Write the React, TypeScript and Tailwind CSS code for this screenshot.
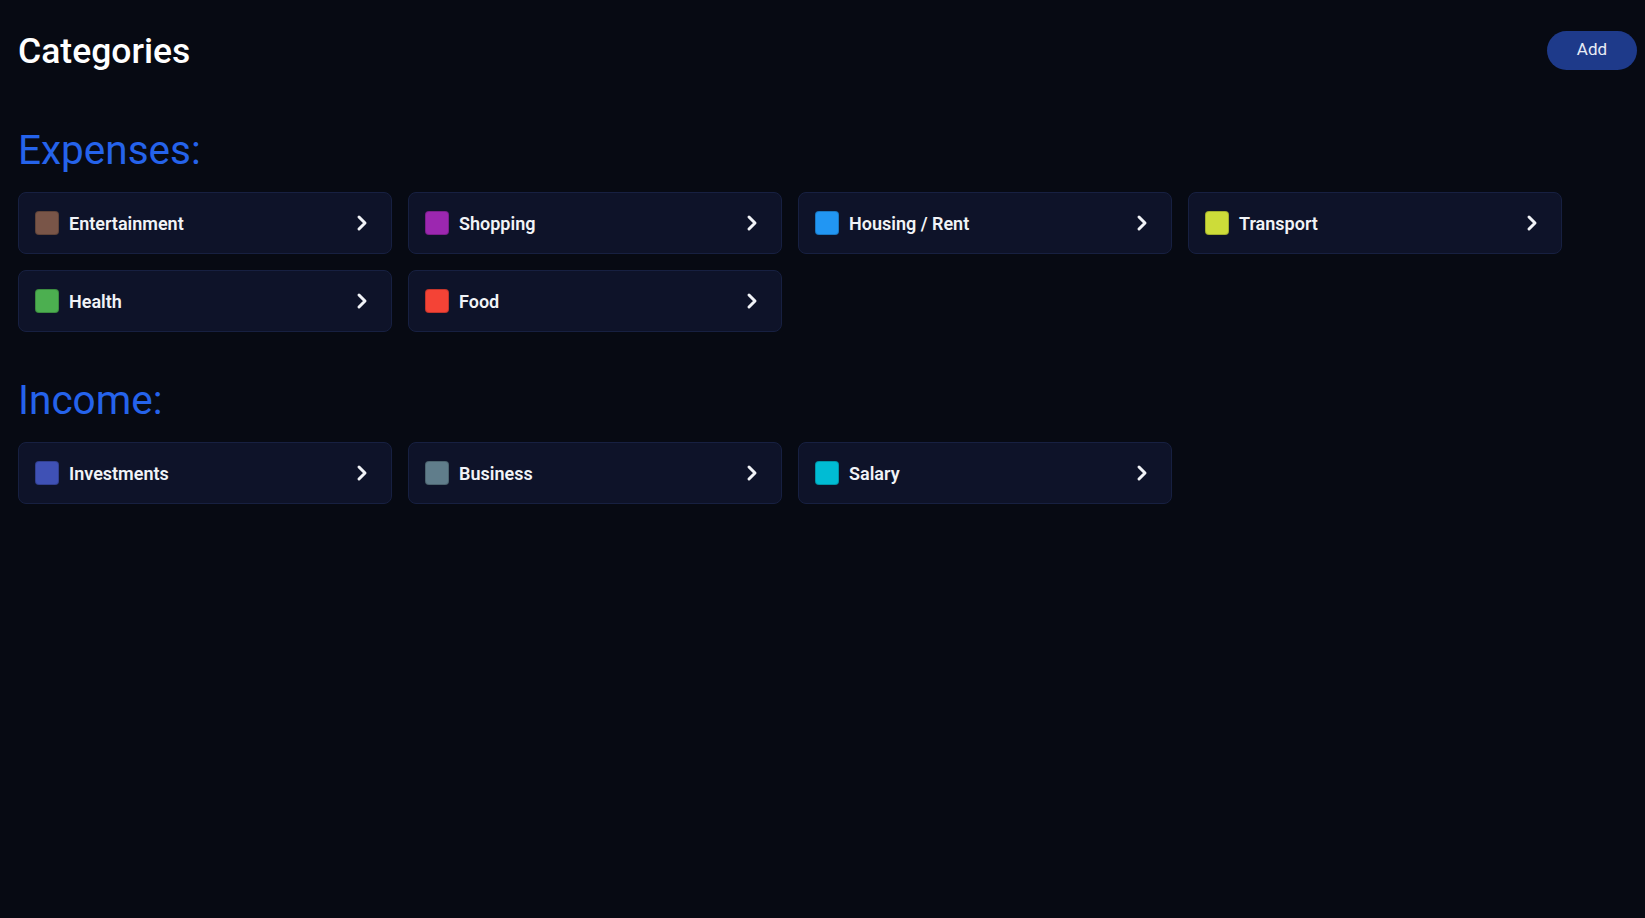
import React from "react";
import { ChevronRight } from "lucide-react";

type Category = { name: string; color: string };

const expenses: Category[] = [
  { name: "Entertainment", color: "bg-[#795548]" },
  { name: "Shopping", color: "bg-[#9c27b0]" },
  { name: "Housing / Rent", color: "bg-[#2196f3]" },
  { name: "Transport", color: "bg-[#cddc39]" },
  { name: "Health", color: "bg-[#4caf50]" },
  { name: "Food", color: "bg-[#f44336]" },
];

const income: Category[] = [
  { name: "Investments", color: "bg-[#3f51b5]" },
  { name: "Business", color: "bg-[#607d8b]" },
  { name: "Salary", color: "bg-[#00bcd4]" },
];

const CategoryCard = ({ item }: { item: Category }) => (
  <button className="flex h-[62px] items-center rounded-lg border border-[#172041] bg-[#0e1329] pl-4 pr-[17px] text-left">
    <span className={`h-6 w-6 shrink-0 rounded-[4px] border border-black/20 ${item.color}`} />
    <span className="ml-[10px] flex-1 text-[18px] font-semibold text-[#f1f3f7]">{item.name}</span>
    <ChevronRight size={24} strokeWidth={3} className="text-[#f1f3f7]" />
  </button>
);

const Section = ({ title, items }: { title: string; items: Category[] }) => (
  <section>
    <h2 className="text-[40.5px] leading-[40px] text-[#2563eb]">{title}</h2>
    <div className="mt-[22px] grid w-[1544px] grid-cols-4 gap-4">
      {items.map((item) => (
        <CategoryCard key={item.name} item={item} />
      ))}
    </div>
  </section>
);

export default function App() {
  return (
    <div className="min-h-[918px] bg-[#070a13] pl-[18px] pr-2 pt-[31px] font-['Roboto','Liberation_Sans',sans-serif]">
      <header className="flex h-[39px] items-center justify-between">
        <h1 className="text-[35.5px] font-medium leading-10 text-white">Categories</h1>
        <button className="-mt-px h-[39px] w-[90px] rounded-full bg-[#1e3a8a] text-[17px] text-[#e8ecf5]">Add</button>
      </header>
      <div className="mt-[60px] flex flex-col gap-12">
        <Section title="Expenses:" items={expenses} />
        <Section title="Income:" items={income} />
      </div>
    </div>
  );
}
